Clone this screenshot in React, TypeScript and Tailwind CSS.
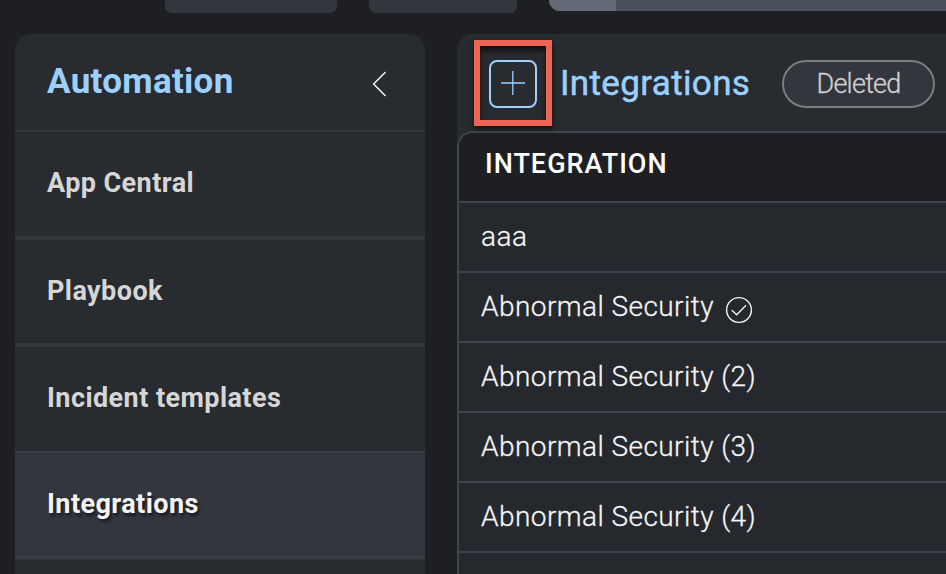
const navItems = ["App Central", "Playbook", "Incident templates"];

const integrations = [
  { name: "aaa", verified: false },
  { name: "Abnormal Security", verified: true },
  { name: "Abnormal Security (2)", verified: false },
  { name: "Abnormal Security (3)", verified: false },
  { name: "Abnormal Security (4)", verified: false },
];

function TopBar() {
  return (
    <div className="flex h-[13px] shrink-0 items-start pl-[165px]">
      <div className="h-[13px] w-[172px] rounded-b-[7px] bg-[#34363e]" />
      <div className="ml-8 h-[13px] w-[148px] rounded-b-[7px] bg-[#34363e]" />
      <div className="ml-8 flex h-[11px] flex-1 overflow-hidden rounded-bl-[16px] bg-[#4a515a]">
        <div className="w-[67px] bg-[#636977]" />
      </div>
    </div>
  );
}

function Sidebar() {
  return (
    <aside className="flex w-[410px] shrink-0 flex-col overflow-hidden rounded-t-[16px] bg-[#282b2f] text-[27px] font-bold text-[#d6d6d7]">
      <div className="flex h-[98px] shrink-0 items-center justify-between border-b-2 border-[#33373b] pr-[38px] pl-8">
        <h2 className="text-[35px] leading-[40px] tracking-[0.3px] text-[#9bd0ff]">Automation</h2>
        <svg width="15" height="26" viewBox="0 0 15 26" fill="none" stroke="#f2f2f2" strokeWidth="1.5" className="mt-1">
          <path d="M13.6 1 1.6 13 13.6 25" />
        </svg>
      </div>
      {navItems.map((item, i) => (
        <div
          key={item}
          className={
            i === 2
              ? "flex h-[106px] shrink-0 items-center border-b-2 border-[#3d4043] pb-[2px] pl-8"
              : i === 1
                ? "flex h-[107px] shrink-0 items-center border-b-4 border-[#33373b] pb-[2px] pl-8"
                : "flex h-[108px] shrink-0 items-center border-b-4 border-[#33373b] pb-[2px] pl-8"
          }
        >
          <span className="leading-8 tracking-[0.43px]">{item}</span>
        </div>
      ))}
      <div className="flex h-[105px] shrink-0 items-center border-b-2 border-[#3d4043] bg-[#34363e] pb-[2px] pl-8 text-[#f4f4f4]">
        <span className="leading-8 tracking-[0.43px] [text-shadow:2px_3px_3px_rgba(0,0,0,0.5)]">Integrations</span>
      </div>
      <div className="h-[2px] shrink-0 bg-[#33373b]" />
    </aside>
  );
}

function CheckCircle() {
  return (
    <svg width="28" height="28" viewBox="0 0 28 28" fill="none" stroke="#f2f2f2" strokeWidth="1.4" className="mt-[5px] ml-[11px]">
      <circle cx="14" cy="14" r="12.4" />
      <path d="m6.8 14.2 4.9 4.6 9.3-9.5" />
    </svg>
  );
}

export default function App() {
  return (
    <div className="flex h-[574px] w-[946px] flex-col overflow-hidden bg-[#1e1f23] font-[Roboto,sans-serif]">
      <TopBar />
      <div className="flex min-h-0 flex-1 gap-8 pt-[21px] pl-[15px]">
        <Sidebar />
        <main className="flex min-w-0 flex-1 flex-col overflow-hidden rounded-tl-[16px] bg-[#282b2f]">
          <header className="flex h-[97px] shrink-0 pt-[6px] pl-[17px]">
            <div className="z-10 flex h-[86px] w-[78px] shrink-0 items-start border-[6px] border-[#ed6655] pt-[14px] pl-[9px] shadow-[0_3px_5px_rgba(0,0,0,0.6),inset_0_5px_5px_rgba(0,0,0,0.6)]">
              <button className="flex size-12 items-center justify-center rounded-[8px] border-2 border-[#9bd0ff]">
                <svg width="24" height="24" viewBox="0 0 24 24" stroke="#9bd0ff" strokeWidth="1.3" className="-mt-[2px]">
                  <path d="M0 12h24M11.8 0v24" />
                </svg>
              </button>
            </div>
            <h1 className="mt-[23px] ml-2 w-[222px] text-[35px] leading-[42px] font-normal tracking-[0.35px] text-[#9bd0ff] [-webkit-text-stroke:0.5px_#9bd0ff]">
              Integrations
            </h1>
            <button className="mt-5 flex h-12 w-[153px] shrink-0 items-center justify-center rounded-full border-2 border-[#7d7d7e] bg-[#34363e] text-[27px] leading-8 font-light tracking-[-0.75px] text-[#d0d0d0] [-webkit-text-stroke:0.3px_#d0d0d0]">
              Deleted
            </button>
          </header>
          <section className="flex flex-1 flex-col overflow-hidden rounded-tl-[16px] border-t-2 border-l-2 border-[#3e464d] bg-[#25282c]">
            <div className="flex h-[70px] shrink-0 items-start border-b-2 border-[#3e464d] bg-[#1e1f23] pt-[15px] pl-[26px] text-[27px] leading-8 font-medium tracking-[1px] text-white">
              INTEGRATION
            </div>
            {integrations.map((row) => (
              <div key={row.name} className="flex h-[70px] shrink-0 items-center border-b-2 border-[#3e464d] pl-[22px] text-[28px] leading-8 font-light tracking-[0.44px] text-[#f4f4f4] [-webkit-text-stroke:0.3px_#f4f4f4]">
                <span>{row.name}</span>
                {row.verified && <CheckCircle />}
              </div>
            ))}
          </section>
        </main>
      </div>
    </div>
  );
}
